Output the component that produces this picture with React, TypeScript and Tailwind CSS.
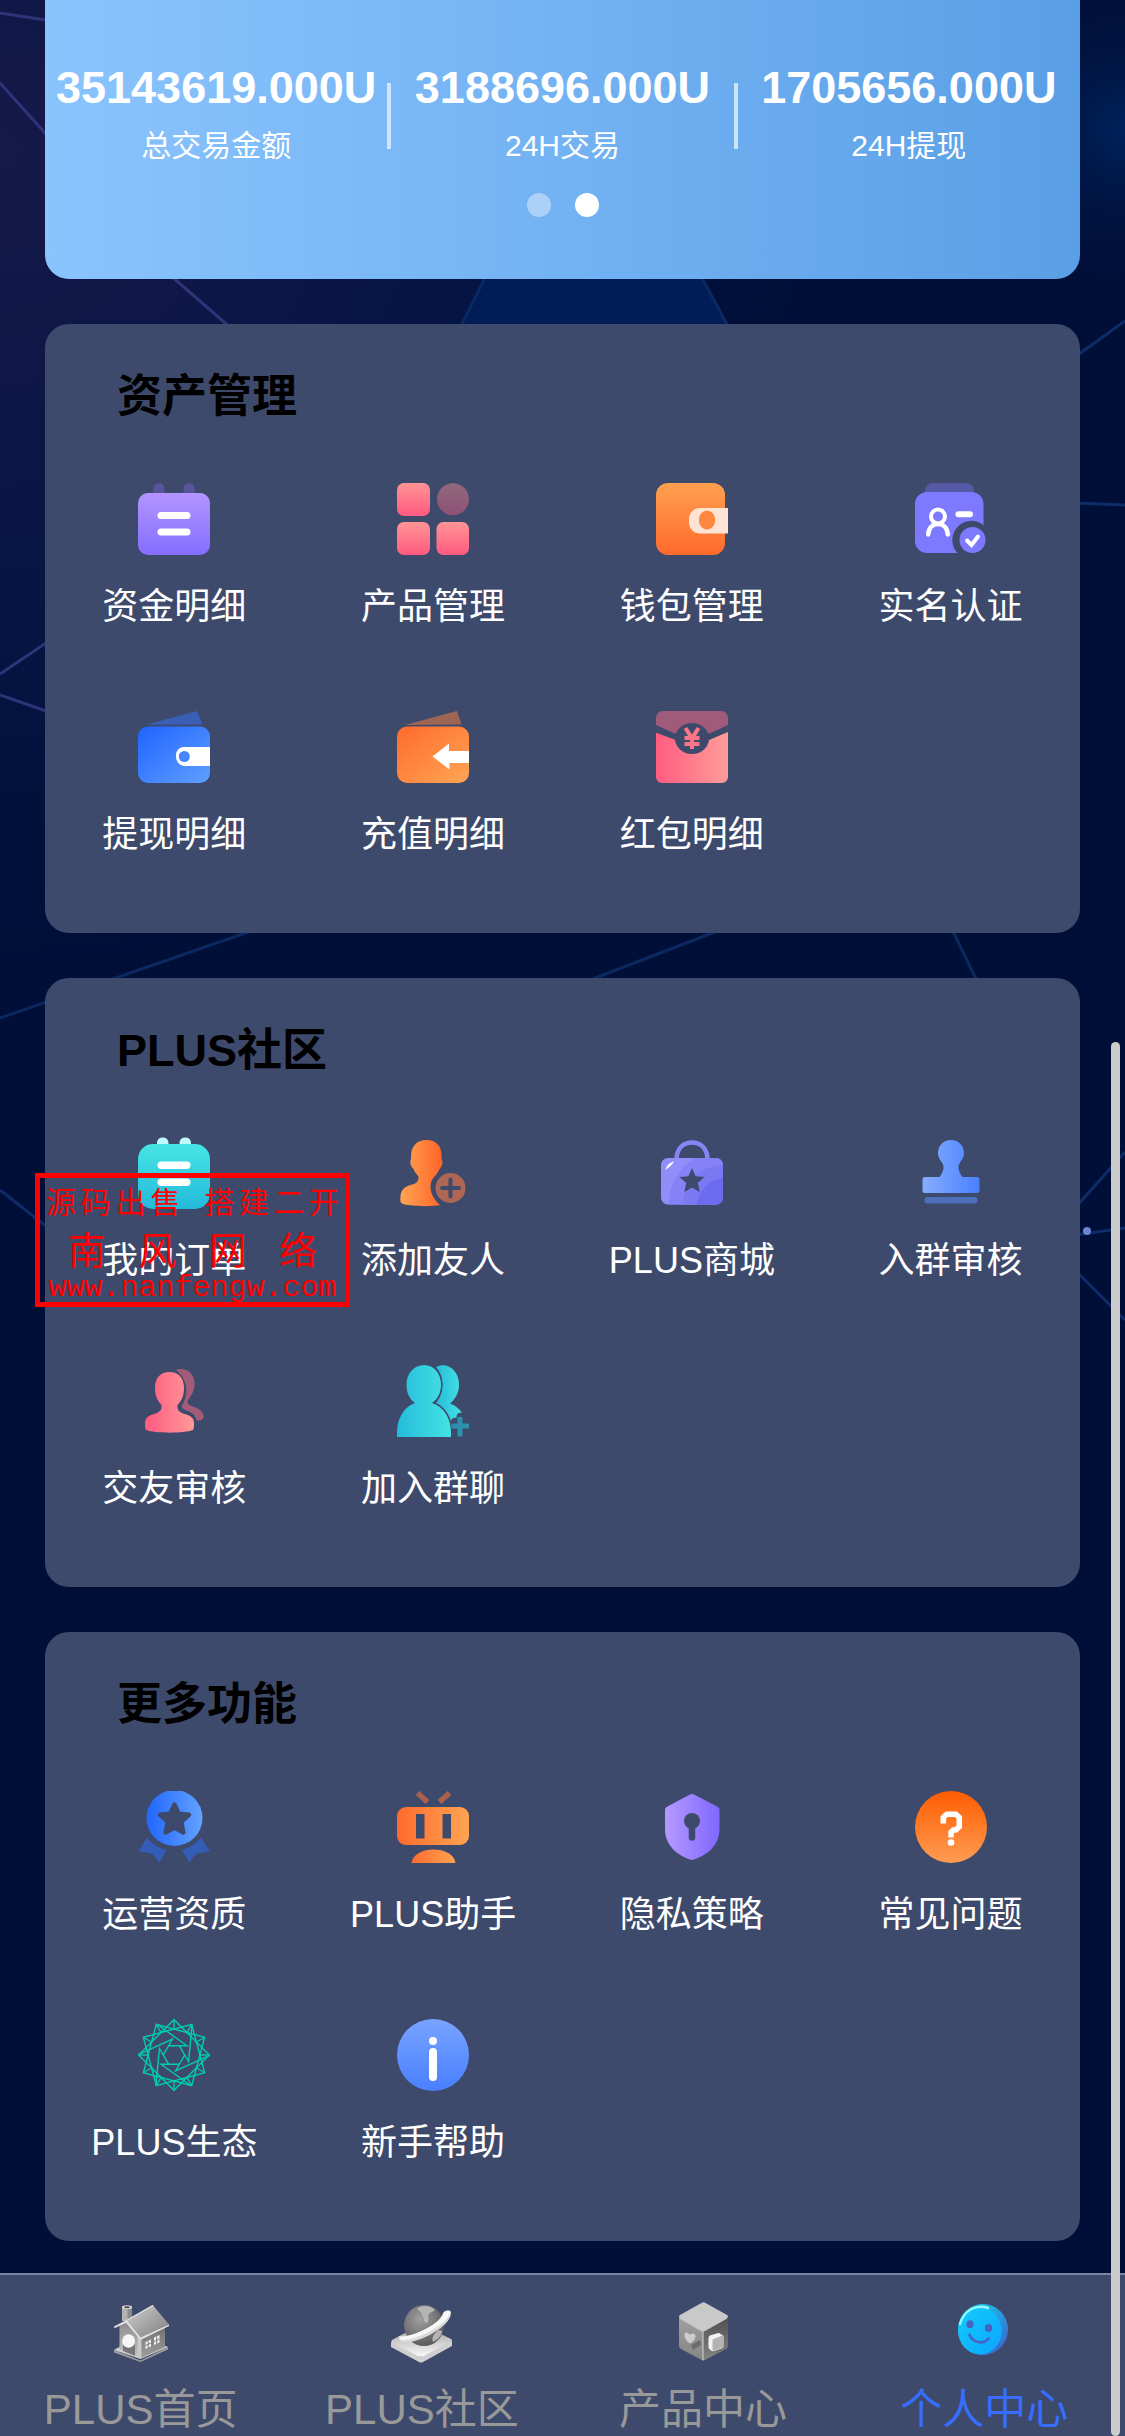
import React, { useState } from 'react';

interface MenuItem {
  label: string;
  icon: React.ReactNode;
}

interface Section {
  title: string;
  items: MenuItem[];
}

interface GradProps {
  id: string;
  from: string;
  to: string;
  dir?: 'v' | 'h' | 'd';
}

const CARD = '#3e4a6c';

const Grad: React.FC<GradProps> = ({ id, from, to, dir = 'v' }) => (
  <linearGradient id={id} x1="0" y1="0" x2={dir === 'v' ? 0 : 1} y2={dir === 'h' ? 0 : 1}>
    <stop offset="0" stopColor={from} />
    <stop offset="1" stopColor={to} />
  </linearGradient>
);

const Icon: React.FC<{ children: React.ReactNode }> = ({ children }) => (
  <svg viewBox="0 0 72 72" className="h-[72px] w-[72px]" aria-hidden="true">
    {children}
  </svg>
);

const FundsIcon = () => (
  <Icon>
    <defs><Grad id="funds" from="#b295ff" to="#846eff" /></defs>
    <path d="M15.5 12V5.500a5.500 5.500 0 0 1 11 0V12zM45.500 12V5.500a5.500 5.500 0 0 1 11 0V12z" fill="#57549c" />
    <rect y="10" width="72" height="62" rx="10" fill="url(#funds)" />
    <rect x="19.500" y="29" width="33" height="7" rx="3.500" fill="#fff" />
    <rect x="19.500" y="45.500" width="33" height="7" rx="3.500" fill="#fff" />
  </Icon>
);

const ProductIcon = () => (
  <Icon>
    <defs><Grad id="product" from="#ff9595" to="#ff5a80" /></defs>
    <rect width="33" height="33" rx="7" fill="url(#product)" />
    <rect y="39" width="33" height="33" rx="7" fill="url(#product)" />
    <rect x="39.500" y="39" width="32.500" height="33" rx="7" fill="url(#product)" />
    <circle cx="56" cy="16.200" r="16" fill="url(#product)" opacity="0.42" />
  </Icon>
);

const WalletIcon = () => (
  <Icon>
    <defs><Grad id="wallet" from="#ffa04f" to="#ff6a2d" /></defs>
    <rect width="69" height="72" rx="12" fill="url(#wallet)" />
    <path d="M72 25H44a11 11 0 0 0-11 11v3.500a11 11 0 0 0 11 11h28z" fill="#ffe3d5" />
    <ellipse cx="51" cy="37" rx="8.200" ry="9.500" fill="#ff8840" />
  </Icon>
);

const IdentityIcon = () => (
  <Icon>
    <path d="M10 12V8a8 8 0 0 1 8-8h33a8 8 0 0 1 8 8v4z" fill="#565aa6" />
    <rect y="9" width="68.500" height="61" rx="12" fill="#7d7aff" />
    <circle cx="23" cy="33.500" r="7" fill="none" stroke="#fff" strokeWidth="4" />
    <path d="M13.200 51.500c.5-6.500 4.300-10.500 9.800-10.500s9.300 4 9.800 10.500" fill="none" stroke="#fff" strokeWidth="4.500" strokeLinecap="round" />
    <rect x="40.500" y="28.300" width="17.500" height="6" rx="3" fill="#fff" />
    <path d="M68.500 42v30H44.500A17.500 17.500 0 0 1 68.500 42z" fill={CARD} />
    <circle cx="57.500" cy="57" r="17.500" fill={CARD} />
    <circle cx="57.500" cy="57" r="13" fill="#7d7aff" />
    <path d="M52 57.500l4.500 4.500 6.500-8.500" fill="none" stroke="#fff" strokeWidth="4" strokeLinecap="round" />
  </Icon>
);

const WithdrawIcon = () => (
  <Icon>
    <defs><Grad id="withdraw" from="#1f63ff" to="#60a0ff" dir="d" /></defs>
    <path d="M9 13.500L59 0l5.500 13.500z" fill="#3a5fb6" />
    <rect y="15.500" width="72" height="56.500" rx="10" fill="url(#withdraw)" />
    <path d="M72 36H46a8 8 0 0 0-8 8v2a9 9 0 0 0 8 9h26z" fill="#fff" />
    <circle cx="46.300" cy="45.500" r="5.500" fill="#4785ff" />
  </Icon>
);

const DepositIcon = () => (
  <Icon>
    <defs><Grad id="deposit" from="#ff6a2d" to="#ffa654" dir="d" /></defs>
    <path d="M8 14L60 0l4.500 13.500z" fill="#9e6553" />
    <rect y="15.500" width="72" height="56.500" rx="10" fill="url(#deposit)" />
    <path d="M35.500 45.500L52 32.500v7.500h20v12H52.500V58.500z" fill="#fff" />
  </Icon>
);

const RedPacketIcon = () => (
  <Icon>
    <defs><Grad id="packet" from="#ff5c80" to="#ff9d9a" dir="h" /></defs>
    <path d="M0 14V7a7 7 0 0 1 7-7h58a7 7 0 0 1 7 7v7L54 23H19z" fill="#a05b7a" />
    <path d="M0 21.500L20 29h33l19-8.500V66a6 6 0 0 1-6 6H6a6 6 0 0 1-6-6z" fill="url(#packet)" />
    <path d="M0 14.500l20 8.500v6L0 21.500zM72 14.500L52 23v6l20-8z" fill={CARD} />
    <ellipse cx="36" cy="27.500" rx="17" ry="15.500" fill={CARD} />
    <path d="M29.500 17l6.500 10.500L42.500 17M28.500 27h15M28.500 33h15M36 26v12" fill="none" stroke="#ff7588" strokeWidth="4" />
  </Icon>
);

const OrderIcon = () => (
  <Icon>
    <defs><Grad id="order" from="#46e5e4" to="#24b9da" /></defs>
    <path d="M19 9V5.500a5.800 5.800 0 0 1 11.500 0V9zM41.500 9V5.500a5.800 5.800 0 0 1 11.500 0V9z" fill="#bffaff" />
    <rect y="7" width="72" height="65" rx="15" fill="url(#order)" />
    <rect x="19.500" y="24.500" width="33" height="7.500" rx="3.700" fill="#fff" />
    <rect x="19.500" y="41.500" width="33" height="7.500" rx="3.700" fill="#fff" />
  </Icon>
);

const AddFriendIcon = () => (
  <Icon>
    <defs><Grad id="addfriend" from="#ffa553" to="#ff6428" dir="h" /></defs>
    <path d="M29.500 3C39 3 44.500 9 44.500 18c0 2 0 3.500.5 5 1.500 3-.5 7-3 10-2 5-6 7.500-7.500 11-2.500 7-.5 16 8.500 24-8 1.800-28 1.500-37-1C3.500 66 3 64 3.500 60c0-7 4-10 10-12 5-1 8.500-3 8-8.500-1.500-2.500-4-4-5-7.500-3-3-4-7-2.500-10C13.500 9 19.500 3 29.500 3z" fill="url(#addfriend)" />
    <circle cx="53.500" cy="51" r="18" fill={CARD} />
    <circle cx="53.500" cy="51" r="15" fill="#ad6753" />
    <path d="M53.500 42.500v17M45 51h17" stroke={CARD} strokeWidth="4" strokeLinecap="round" />
  </Icon>
);

const MallIcon = () => (
  <Icon>
    <defs>
      <clipPath id="mallBody"><rect x="5" y="21" width="62" height="46.500" rx="7" /></clipPath>
    </defs>
    <path d="M20.500 23c0-12 7-17.500 15.500-17.500S51.500 11 51.500 23" fill="none" stroke="#8784f5" strokeWidth="4.500" />
    <g clipPath="url(#mallBody)">
      <rect x="5" y="21" width="62" height="47" fill="#918ef9" />
      <circle cx="64" cy="66" r="51" fill="#8482f6" />
      <circle cx="67" cy="68" r="40" fill="#7a78f3" />
      <circle cx="70" cy="70" r="29" fill="#6b6bf0" />
    </g>
    <path d="M9.500 33c.5-4 4-7.500 8.500-8.500-2 3.500-5 6-8.500 8.500z" fill="#fff" />
    <path d="M36 31l3.600 8.200 8.800.9-6.600 6 1.900 8.800-7.700-4.500-7.700 4.500 1.900-8.800-6.600-6 8.800-.9z" fill={CARD} />
  </Icon>
);

const StampIcon = () => (
  <Icon>
    <defs><Grad id="stamp" from="#86adff" to="#4a80ff" dir="h" /></defs>
    <path d="M36 3c8 0 13 6 13 13 0 6-4.500 9-5.500 12.500C43 33 45 37 47.500 40H62a2.500 2.500 0 0 1 2.500 2.500v11A2.500 2.500 0 0 1 62 56H10a2.500 2.500 0 0 1-2.500-2.500v-11A2.500 2.500 0 0 1 10 40h14.500c2.500-3 4.500-7 4-11.500C27.500 25 23 22 23 16 23 9 28 3 36 3z" fill="url(#stamp)" />
    <rect x="9.500" y="60" width="53" height="6.500" rx="3" fill="#4d70ba" />
  </Icon>
);

const FriendReviewIcon = () => (
  <Icon>
    <defs><Grad id="review" from="#ff5a80" to="#ff9a98" dir="h" /></defs>
    <path d="M38 5c3-1.500 7-1.200 10 0 6 2.500 8.500 8 8.500 14.500S53 31 50 35c-1.500 3.500 1 5 5 6.500 6 2 10.500 5 10.500 9.500 0 3-1 4.500-7 4.500-1-7-7-9-11.500-10.500-2-1-3-2.500-3.500-3.500C51 30 50 14 38 5z" fill="#a35b7a" />
    <path d="M31.500 7C40 7 46 12.500 46 23c0 9-3.500 14-6.500 17-.5 5 1.500 7 7 9 6 1.500 9.500 4 9.500 9 0 3 0 5-1 7-9 3.500-38 3.500-47 0-1-2-1-4-1-7 0-5 3.500-7.500 9.500-9 5.500-2 7.500-4 7-9-3-3-6.500-8-6.500-17C17 12.500 23 7 31.500 7z" fill="url(#review)" stroke={CARD} strokeWidth="2.500" paintOrder="stroke" />
  </Icon>
);

const GroupChatIcon = () => (
  <Icon>
    <defs><Grad id="group" from="#25bbdb" to="#45e3e3" dir="h" /></defs>
    <path d="M39 2C50-3.500 62 5 62 20c0 8-4 14.500-9 18.500 5 1.500 9 5 12 9.500-4-1-6 2-5.500 5-3-.5-5 0-5.500 3.500C50 48 45.500 41.500 39 38c8-10 9-26 0-36z" fill="url(#group)" />
    <path d="M27 0c10 0 17 8.500 17 19.500 0 9-4 15-9 18.500C47 42 54 53 54 68v4H0v-4c0-15 7-26 18-30-5-3.500-8.500-9.500-8.500-18.500C9.500 8.500 17 0 27 0z" fill="url(#group)" stroke={CARD} strokeWidth="3" paintOrder="stroke" />
    <path d="M63 52v19.500M54.500 61H72" stroke="#2f90ae" strokeWidth="5" />
  </Icon>
);

const LicenseIcon = () => (
  <Icon>
    <defs><Grad id="license" from="#2266ff" to="#62a2ff" dir="h" /></defs>
    <path d="M9 46.500C14 53 21 57 28.500 59L21 72c-1.500-3.500-4-7-7-9-4-2-9-1.500-13.500-2.500zM63 46.500C58 53 51 57 44 59l7.500 13c1.500-3.500 4-7 7-9 4-2 9-1.500 13.500-2.500z" fill="#345db8" />
    <circle cx="36.500" cy="27" r="28" fill="url(#license)" />
    <path d="M36.500 13.500l4.200 9.300 10.300 1-7.800 7 2.200 10.700-8.900-5-8.900 5 2.200-10.700-7.800-7 10.300-1z" fill={CARD} stroke={CARD} strokeWidth="4.500" strokeLinejoin="round" />
  </Icon>
);

const AssistantIcon = () => (
  <Icon>
    <defs><Grad id="robot" from="#ff6a2e" to="#ffa452" dir="h" /></defs>
    <path d="M20.500 2l10 9M52.500 2l-10 9" stroke="#a9614f" strokeWidth="5.500" />
    <rect y="16" width="72" height="38" rx="9" fill="url(#robot)" />
    <path d="M19 23h8.500v24.500H19zM45.500 23H54v24.500h-8.500z" fill={CARD} />
    <path d="M14.500 72c1.500-9 11-13.500 22-13.500S57 63 58.500 72z" fill="url(#robot)" />
  </Icon>
);

const PrivacyIcon = () => (
  <Icon>
    <defs><Grad id="privacy" from="#b699ff" to="#7f68ff" dir="h" /></defs>
    <path d="M33.500 3.800a5 5 0 0 1 5 0L61 15.500a4 4 0 0 1 2.500 4V38c0 15-10 25-25.500 30.500a5 5 0 0 1-4 0C19 63 9 53 9 38V19.500a4 4 0 0 1 2.500-4z" fill="url(#privacy)" />
    <circle cx="36" cy="30" r="8" fill={CARD} />
    <path d="M36 32v14.500" stroke={CARD} strokeWidth="6.500" strokeLinecap="round" />
  </Icon>
);

const FaqIcon = () => (
  <Icon>
    <defs><Grad id="faq" from="#ff5c00" to="#ff9c53" /></defs>
    <circle cx="36" cy="36" r="36" fill="url(#faq)" />
    <path d="M28.300 32.500v-6l3.500-3.300h9l3.500 3.300v9l-3.500 3.500h-2.500L36 41.200v5.300" fill="none" stroke="#fff" strokeWidth="5.500" />
    <circle cx="36" cy="51.500" r="3.300" fill="#fff" />
  </Icon>
);

const EcologyIcon = () => (
  <Icon>
    <g transform="translate(36 36)" fill="none" stroke="#00cdac" strokeWidth="1.400">
      {[0, 30, 60].map(a => (
        <rect key={a} x="-25" y="-25" width="50" height="50" transform={`rotate(${a + 45})`} />
      ))}
      {[0, 60, 120, 180, 240, 300].map(a => (
        <path key={a} d="M-5.500-9.300H13L-17.500-31" transform={`rotate(${a})`} />
      ))}
      {[0, 30, 60, 90, 120, 150, 180, 210, 240, 270, 300, 330].map(a => (
        <path key={a} d="M0-35.500V-25" transform={`rotate(${a})`} />
      ))}
    </g>
  </Icon>
);

const HelpIcon = () => (
  <Icon>
    <defs><Grad id="help" from="#78a3ff" to="#497fff" /></defs>
    <circle cx="36" cy="36" r="36" fill="url(#help)" />
    <circle cx="36" cy="22" r="4" fill="#fff" />
    <rect x="32" y="29" width="8" height="33" rx="4" fill="#fff" />
  </Icon>
);

const TabIcon: React.FC<{ children: React.ReactNode }> = ({ children }) => (
  <svg viewBox="0 0 64 64" className="h-16 w-16" aria-hidden="true">
    {children}
  </svg>
);

const HouseIcon = () => (
  <TabIcon>
    <defs>
      <Grad id="roof" from="#d2d2d2" to="#7c7c7c" dir="d" />
      <Grad id="wallL" from="#8c8c8c" to="#c2c2c2" />
      <Grad id="wallR" from="#6f6f6f" to="#9d9d9d" />
    </defs>
    <path d="M5 50l26.500 10.500L59 47v2.500L31.500 62 5 52.500z" fill="#9b9b9b" />
    <path d="M5 50l7-4 19.500 8L52 44l7 3-27.500 12z" fill="#cfcfcf" />
    <path d="M13 7l5-1 5 1v14H13z" fill="#b3b3b3" />
    <path d="M18.500 8l4.500-1v14h-4.500z" fill="#8b8b8b" />
    <ellipse cx="18" cy="7.200" rx="5" ry="1.900" fill="#dedede" />
    <ellipse cx="18" cy="7.300" rx="3" ry="1" fill="#4b4b4b" />
    <path d="M10.500 25l6.500-4 15 16v21l-21.500-9z" fill="url(#wallL)" />
    <path d="M32 37l24-12v22L32 58z" fill="url(#wallR)" />
    <path d="M28.500 36l4-2v23l-4-1z" fill="#c9c9c9" />
    <path d="M14 40c0-7 12-5 12 3v13l-12-5z" fill="#777" />
    <ellipse cx="19.600" cy="41" rx="6.500" ry="6.800" fill="#f6f6f6" />
    <path d="M43.700 5L60 24.500 31.500 38 16.500 20.500z" fill="url(#roof)" />
    <path d="M43.700 5L16.500 20.500 5 26.500l.5 1.800 11.500-5.500L31.500 40 60 26v-1.500L31.700 37.500 18 20.800 44.500 6z" fill="#e2e2e2" />
    <path d="M36.500 42l5.500-2.500v7L36.500 49zM45 37.500l5.500-2.500v7.500L45 45z" fill="#f1f1f1" />
    <path d="M39.200 41v7M36.500 45.500l5.500-2.500M47.700 36.500v7.500M45 41.500l5.500-2.500" stroke="#7b7b7b" strokeWidth="1" />
  </TabIcon>
);

const PlanetIcon = () => (
  <TabIcon>
    <defs>
      <radialGradient id="globe" cx="0.400" cy="0.350" r="0.700">
        <stop offset="0" stopColor="#a0a0a0" />
        <stop offset="1" stopColor="#565656" />
      </radialGradient>
      <Grad id="plate" from="#9a9a9a" to="#fafafa" />
    </defs>
    <path d="M1 42v5l28 15q2 1 4 0l29-16v-5L31 57z" fill="#cfcfcf" />
    <path d="M2 40l26-14q3-1.500 6 0l27 13q2 1.500 0 3L34 56q-3 1.500-6 0L2 43q-1.500-1.500 0-3z" fill="url(#plate)" />
    <ellipse cx="34" cy="25.500" rx="20" ry="20.500" fill="url(#globe)" />
    <path d="M27 9c4-4 12-4 17 0 2 3-3 2-5 5s1 6-2 9c-5 0-1-8-10-14zM43 42c-2-5 2-9 5-12l4 1c0 4-4 9-9 11z" fill="#b5b5b5" />
    <path d="M9 36.500C20 38 50 25 53 13c2-3 8-4 8 0 0 14-34 31-48 29.500-4-.5-5-4-4-6z" fill="#dadada" />
    <path d="M9 36.500C22 38 51 24 54 12.500c2-2 6-2 6.500-.5C58 25 24 41.500 11 40z" fill="#f7f7f7" />
  </TabIcon>
);

const BoxIcon = () => (
  <TabIcon>
    <defs>
      <Grad id="boxL" from="#9f9f9f" to="#858585" />
      <Grad id="boxR" from="#4f4f4f" to="#858585" />
    </defs>
    <path d="M8 17l24.500 14v30L10 49q-2-1-2-3z" fill="url(#boxL)" />
    <path d="M57 17L32 31v30l23-12q2-1 2-3z" fill="url(#boxR)" />
    <path d="M30.500 3q2-1.300 4 0L56 15q2 1.500 0 3L34 30.500q-2 1-4 0L9 18q-2-1.500 0-3z" fill="#c9c9c9" />
    <path d="M32 31.500V60M32 31.500L9 18.500M32 31.500l24-13.500" stroke="#c6c6c6" strokeWidth="1.200" fill="none" />
    <path d="M20 45l9-5 1 5-8 5z" fill="#6c6c6c" />
    <path d="M19 43.500c-3-2-6-5.500-5.500-9 .5-3 4-2.500 5.500.5 2-2.500 5.500-2 5.500 1.500 0 3-3 5.500-5.500 7z" fill="#cdcdcd" />
    <path d="M37.500 38q0-2 2-2.800l7-2q2-.5 3 .8l3 2V46q0 1.500-1.500 2.200L43 51q-1.500.5-3-.5L37.500 48z" fill="#f3f3f3" />
    <path d="M41.500 39.500l10-4q1-.3 1 1V46q0 1-1 1.500L43 50.500q-1.500.5-1.500-1z" fill="#b3b3b3" />
  </TabIcon>
);

const SmileIcon = () => (
  <TabIcon>
    <defs>
      <Grad id="smileSide" from="#10e3f5" to="#4159c8" dir="d" />
      <Grad id="smileFace" from="#14cdfa" to="#0aa4ff" dir="d" />
    </defs>
    <ellipse cx="31" cy="29.500" rx="25" ry="25.500" fill="url(#smileSide)" />
    <ellipse cx="28" cy="31" rx="21.800" ry="23.500" fill="url(#smileFace)" />
    <path d="M8 24C12 10 24 4 36 8" fill="none" stroke="#8ff8fb" strokeWidth="2.500" strokeLinecap="round" />
    <ellipse cx="18" cy="24.300" rx="3.500" ry="4" fill="#4a62c4" />
    <ellipse cx="36.500" cy="28" rx="3.700" ry="4" fill="#4a62c4" />
    <path d="M17.500 35c4 8.500 14.500 9.500 19 3.500" fill="none" stroke="#4a62c4" strokeWidth="2.800" strokeLinecap="round" />
  </TabIcon>
);

const STATS = [
  { value: '35143619.000U', label: '总交易金额' },
  { value: '3188696.000U', label: '24H交易' },
  { value: '1705656.000U', label: '24H提现' },
];

const SECTIONS: Section[] = [
  {
    title: '资产管理',
    items: [
      { label: '资金明细', icon: <FundsIcon /> },
      { label: '产品管理', icon: <ProductIcon /> },
      { label: '钱包管理', icon: <WalletIcon /> },
      { label: '实名认证', icon: <IdentityIcon /> },
      { label: '提现明细', icon: <WithdrawIcon /> },
      { label: '充值明细', icon: <DepositIcon /> },
      { label: '红包明细', icon: <RedPacketIcon /> },
    ],
  },
  {
    title: 'PLUS社区',
    items: [
      { label: '我的订单', icon: <OrderIcon /> },
      { label: '添加友人', icon: <AddFriendIcon /> },
      { label: 'PLUS商城', icon: <MallIcon /> },
      { label: '入群审核', icon: <StampIcon /> },
      { label: '交友审核', icon: <FriendReviewIcon /> },
      { label: '加入群聊', icon: <GroupChatIcon /> },
    ],
  },
  {
    title: '更多功能',
    items: [
      { label: '运营资质', icon: <LicenseIcon /> },
      { label: 'PLUS助手', icon: <AssistantIcon /> },
      { label: '隐私策略', icon: <PrivacyIcon /> },
      { label: '常见问题', icon: <FaqIcon /> },
      { label: 'PLUS生态', icon: <EcologyIcon /> },
      { label: '新手帮助', icon: <HelpIcon /> },
    ],
  },
];

const TABS: MenuItem[] = [
  { label: 'PLUS首页', icon: <HouseIcon /> },
  { label: 'PLUS社区', icon: <PlanetIcon /> },
  { label: '产品中心', icon: <BoxIcon /> },
  { label: '个人中心', icon: <SmileIcon /> },
];

// Night-blue network pattern behind the cards
const Backdrop = () => (
  <svg
    viewBox="0 0 1125 2436"
    preserveAspectRatio="none"
    className="absolute inset-0 -z-10 h-full w-full"
    aria-hidden="true"
  >
    <defs>
      <radialGradient id="bgLeft" gradientUnits="userSpaceOnUse" cx="0" cy="150" r="900">
        <stop offset="0" stopColor="#16194a" />
        <stop offset="0.500" stopColor="#061544" />
        <stop offset="1" stopColor="#000f38" stopOpacity="0" />
      </radialGradient>
      <radialGradient id="bgRight" gradientUnits="userSpaceOnUse" cx="1125" cy="130" r="170">
        <stop offset="0" stopColor="#00225c" />
        <stop offset="1" stopColor="#000f38" stopOpacity="0" />
      </radialGradient>
    </defs>
    <rect width="1125" height="2436" fill="#000f38" />
    <rect width="1125" height="1100" fill="url(#bgLeft)" />
    <rect x="900" width="225" height="330" fill="url(#bgRight)" />
    <path d="M499 250L447 354h296l-56-104z" fill="#001d58" />
    <g fill="none" strokeWidth="3">
      <path d="M0 13l46 7M0 83l46 51M170 275l62 54M0 674l46-31M0 695l46 16" stroke="#2e3478" />
      <path d="M499 250L447 354M687 250l56 104M0 1018l260-90M590 980l130-50M950 925l28 58" stroke="#0c2860" />
      <path d="M1075 357l50-36M1075 503l50 2M1075 1208l50-56M1075 1235l50-7M1075 1270l50 50M0 1190l46 36" stroke="#0e2c68" />
    </g>
    <circle cx="1087" cy="1231" r="4" fill="#6a86d0" />
  </svg>
);

const StatsCard = () => (
  <section className="rounded-b-3xl bg-linear-to-r from-[#8ac4fd] via-[#73b2f3] to-[#5a9fe5] pt-[58px] pb-[62px] text-white">
    <div className="flex items-center">
      {STATS.map((s, i) => (
        <React.Fragment key={s.label}>
          {i > 0 && <span className="h-[66px] w-1 bg-white/65" />}
          <div className="flex-1 text-center">
            <p className="text-[45px] leading-[60px] font-bold">{s.value}</p>
            <p className="text-[30px] leading-[56px]">{s.label}</p>
          </div>
        </React.Fragment>
      ))}
    </div>
    <div className="mt-[19px] flex justify-center gap-6">
      <span className="size-6 rounded-full bg-white/40" />
      <span className="size-6 rounded-full bg-white" />
    </div>
  </section>
);

const SectionCard: React.FC<Section> = ({ title, items }) => (
  <section className="rounded-3xl bg-[#3e4a6c] pt-[46px] pb-[72px]">
    <h2 className="px-[72px] text-[45px] leading-[54px] font-bold text-black">{title}</h2>
    <div className="mt-[59px] grid grid-cols-4 gap-y-[78px]">
      {items.map(item => (
        <button key={item.label} type="button" className="flex flex-col items-center gap-[26px] text-white">
          {item.icon}
          <span className="text-[36px] leading-[52px] whitespace-nowrap">{item.label}</span>
        </button>
      ))}
    </div>
  </section>
);

// Stamp that floats over the page
const Watermark = () => (
  <div className="pointer-events-none absolute top-[1173px] left-[35px] w-[315px] border-5 border-[#ff0000] text-[#ff0000]">
    <div className="flex gap-6 px-1.5 text-[30px] leading-[50px]">
      {['源码出售', '搭建二开'].map(word => (
        <p key={word} className="flex flex-1 justify-between">
          {[...word].map(ch => (
            <span key={ch}>{ch}</span>
          ))}
        </p>
      ))}
    </div>
    <p className="flex justify-between px-7 text-[38px] leading-[46px]">
      {[...'南风网络'].map(ch => (
        <span key={ch}>{ch}</span>
      ))}
    </p>
    <p className="text-center font-['Liberation_Mono',monospace] text-[30px] leading-[28px]">www.nanfengw.com</p>
  </div>
);

const App: React.FC = () => {
  const [active, setActive] = useState('个人中心');

  return (
    <div className="relative isolate flex min-h-screen flex-col overflow-hidden bg-[#000f38] font-['Liberation_Sans','Noto_Sans_CJK_SC',sans-serif]">
      <Backdrop />

      <main className="flex flex-col gap-[45px] px-[45px] pb-8">
        <StatsCard />
        {SECTIONS.map(s => (
          <SectionCard key={s.title} {...s} />
        ))}
      </main>

      <nav className="mt-auto flex border-t-2 border-[#7b859c] bg-[#3e4a6c] pt-[25px]">
        {TABS.map(tab => (
          <button
            key={tab.label}
            type="button"
            onClick={() => setActive(tab.label)}
            className={`flex flex-1 flex-col items-center gap-5 text-[42px] leading-[52px] ${
              active === tab.label ? 'text-[#366eff]' : 'text-[#999999]'
            }`}
          >
            {tab.icon}
            <span>{tab.label}</span>
          </button>
        ))}
      </nav>

      <Watermark />

      {/* Scroll thumb */}
      <div className="absolute top-[1042px] right-[5px] bottom-0 w-[9px] rounded-full bg-[#cccccc]" />
    </div>
  );
};

export default App;
